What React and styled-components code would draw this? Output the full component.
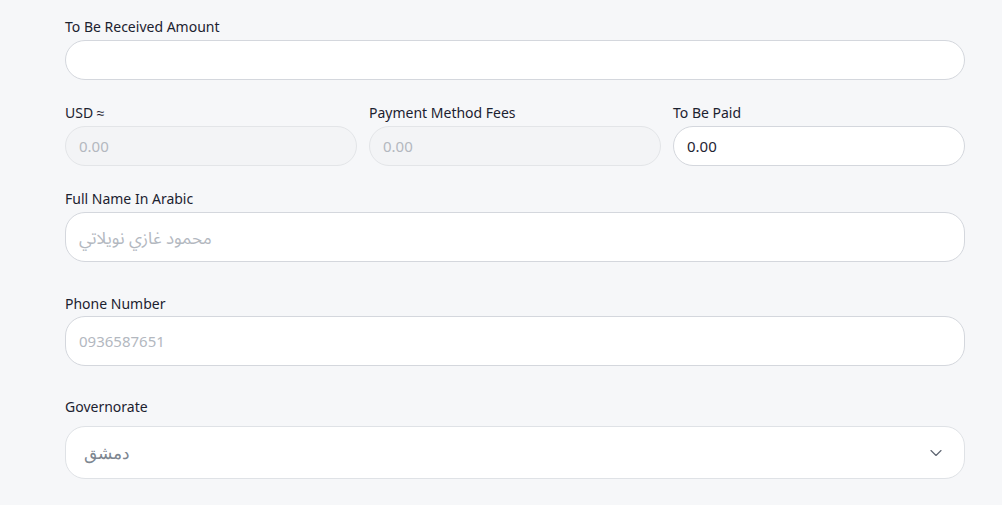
import styled, { createGlobalStyle } from "styled-components";
import { ChevronDown } from "lucide-react";

const GlobalStyle = createGlobalStyle`
  html, body {
    margin: 0;
    background: #f6f7f9;
  }
  body {
    font-family: "Noto Sans", "Liberation Sans", sans-serif;
    color: #1f2533;
  }
  * {
    box-sizing: border-box;
  }
`;

const Form = styled.form`
  width: 1002px;
  padding: 17px 37px 24px 65px;
  display: flex;
  flex-direction: column;
`;

const Field = styled.div`
  display: flex;
  flex-direction: column;
  margin-top: ${(p) => p.$top || 0}px;
`;

const Row = styled.div`
  display: grid;
  grid-template-columns: repeat(3, 1fr);
  gap: 12px;
  margin-top: ${(p) => p.$top || 0}px;
`;

const Label = styled.label`
  font-size: 14px;
  font-weight: 400;
  line-height: 20px;
  color: #1c2230;
  margin-bottom: ${(p) => p.$gap ?? 3}px;
`;

const Input = styled.input`
  width: 100%;
  height: ${(p) => p.$h || 40}px;
  border: 1px solid #d4d7dd;
  border-radius: 20px;
  background: #fff;
  padding: 0 13px;
  font-family: "Noto Sans", "Noto Sans Arabic", sans-serif;
  font-size: ${(p) => p.$fs || 15}px;
  color: #1f2533;
  outline: none;

  &::placeholder {
    color: #b3b8bf;
  }

  &:disabled {
    background: #f3f4f6;
    border-color: #e3e5e8;
    color: #b3b8bf;
  }
`;

const Select = styled.div`
  height: 53px;
  border: 1px solid #dfe2e6;
  border-radius: 20px;
  background: #fff;
  display: flex;
  align-items: center;
  justify-content: space-between;
  padding: 0 18px 0 18px;
  font-size: 17px;
  color: #7d8690;

  svg {
    color: #5f6672;
  }
`;

export default function App() {
  return (
    <>
      <GlobalStyle />
      <Form>
        <Field>
          <Label>To Be Received Amount</Label>
          <Input />
        </Field>

        <Row $top={23}>
          <Field>
            <Label>USD ≈</Label>
            <Input disabled value="0.00" readOnly />
          </Field>
          <Field>
            <Label>Payment Method Fees</Label>
            <Input disabled value="0.00" readOnly />
          </Field>
          <Field>
            <Label>To Be Paid</Label>
            <Input value="0.00" readOnly />
          </Field>
        </Row>

        <Field $top={23}>
          <Label>Full Name In Arabic</Label>
          <Input $h={50} $fs={17} placeholder="محمود غازي نويلاتي" />
        </Field>

        <Field $top={32}>
          <Label $gap={2}>Phone Number</Label>
          <Input $h={50} placeholder="0936587651" />
        </Field>

        <Field $top={31}>
          <Label $gap={9}>Governorate</Label>
          <Select>
            <span>دمشق</span>
            <ChevronDown size={20} strokeWidth={1.4} />
          </Select>
        </Field>
      </Form>
    </>
  );
}
